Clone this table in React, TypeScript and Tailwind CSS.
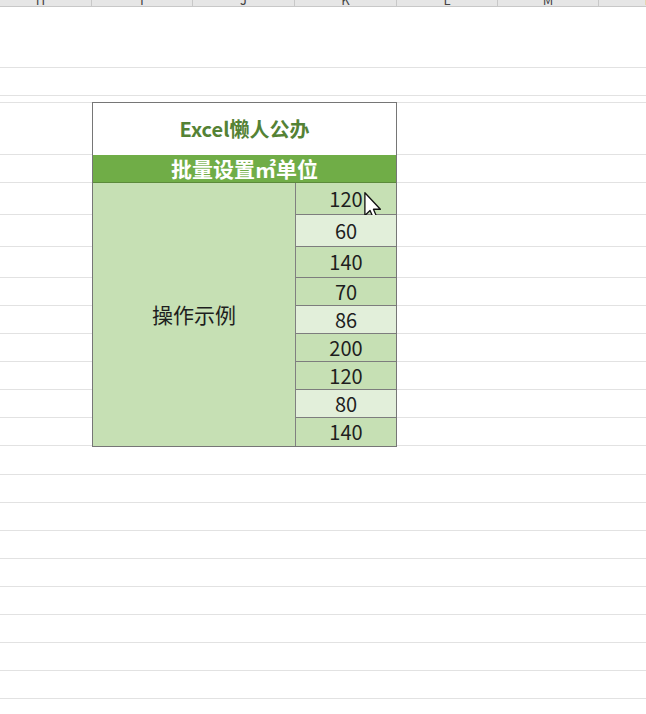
import type { ReactNode } from "react";

const font = '"Noto Sans CJK SC", "Noto Sans", sans-serif';

const columns = [
  { key: "H", w: "w-[102px]" },
  { key: "I", w: "w-[101px]" },
  { key: "J", w: "w-[102px]" },
  { key: "K", w: "w-[102px]" },
  { key: "L", w: "w-[101px]" },
  { key: "M", w: "w-[101px]" },
  { key: "N", w: "w-[102px]" },
];

const values = [
  { v: 120, h: "h-[32px]", light: false },
  { v: 60, h: "h-[32px]", light: true },
  { v: 140, h: "h-[31px]", light: false },
  { v: 70, h: "h-[28px]", light: false },
  { v: 86, h: "h-[28px]", light: true },
  { v: 200, h: "h-[28px]", light: false },
  { v: 120, h: "h-[28px]", light: false },
  { v: 80, h: "h-[28px]", light: true },
  { v: 140, h: "h-[28px]", light: false },
];

// sheet row heights beside the table (each includes its bottom gridline)
const sideRows = ["h-[52px]", "h-[28px]", "h-[32px]", "h-[32px]", "h-[31px]", "h-[28px]", "h-[28px]", "h-[28px]", "h-[28px]", "h-[28px]", "h-[28px]"];

function SheetRow({ h, children }: { h: string; children?: ReactNode }) {
  return <div className={`${h} shrink-0 border-b border-[#e2e2e2]`}>{children}</div>;
}

function Cursor() {
  return (
    <svg
      className="absolute left-[68px] top-[9px]"
      width="18"
      height="28"
      viewBox="0 0 12 19"
    >
      <path
        d="M0.5 0.5 L0.5 16 L4 12.6 L6.6 18.5 L8.8 17.5 L6.3 11.7 L11 11.7 Z"
        fill="#fff"
        stroke="#111"
        strokeWidth="0.9"
        strokeLinejoin="round"
      />
    </svg>
  );
}

function SideColumn({ grow }: { grow?: boolean }) {
  return (
    <div
      className={`${grow ? "flex-1" : "w-[92px]"} flex flex-col border-t border-[#e2e2e2]`}
    >
      {sideRows.map((h, i) => (
        <SheetRow key={i} h={h} />
      ))}
    </div>
  );
}

export default function App() {
  return (
    <div
      className="w-[646px] h-[714px] overflow-hidden bg-white flex flex-col"
      style={{ fontFamily: font }}
    >
      {/* column header strip, scrolled so only the letter feet show */}
      <div className="h-[7px] shrink-0 overflow-hidden bg-[#e6e6e6] border-b border-[#c8c8c8]">
        <div className="flex -mt-[13px] -ml-[10px]">
          {columns.map((c) => (
            <div
              key={c.key}
              className={`${c.w} h-[19px] shrink-0 border-r border-[#c8c8c8] flex items-end justify-center text-[13px] leading-none text-[#444]`}
            >
              {c.key}
            </div>
          ))}
        </div>
      </div>

      <SheetRow h="h-[61px]" />
      <SheetRow h="h-[28px]" />
      <div className="h-[6px] shrink-0" />

      <div className="flex shrink-0">
        <SideColumn />

        <div className="w-[305px] border border-[#767676] flex flex-col">
          <div className="h-[52px] flex items-center justify-center text-[20px] font-bold text-[#548235]">
            Excel懒人公办
          </div>
          <div className="h-[28px] bg-[#70ad47] flex items-center justify-center text-[21px] font-bold text-white border-b border-[#5b8a3a] leading-none">
            批量设置㎡单位
          </div>
          <div className="flex">
            <div className="w-[203px] bg-[#c6e0b4] border-r border-[#808080] flex items-center justify-center text-[21px] text-[#1e1e1e]">
              操作示例
            </div>
            <div className="flex-1 flex flex-col">
              {values.map((r, i) => (
                <div
                  key={i}
                  className={`${r.h} ${r.light ? "bg-[#e2efda]" : "bg-[#c6e0b4]"} ${i < values.length - 1 ? "border-b border-[#7d7d7d]" : ""} relative flex items-center justify-center text-[20px] text-[#1e1e1e] leading-none`}
                >
                  {r.v}
                  {i === 0 && <Cursor />}
                </div>
              ))}
            </div>
          </div>
        </div>

        <SideColumn grow />
      </div>

      {Array.from({ length: 9 }).map((_, i) => (
        <SheetRow key={i} h="h-[28px]" />
      ))}
    </div>
  );
}
